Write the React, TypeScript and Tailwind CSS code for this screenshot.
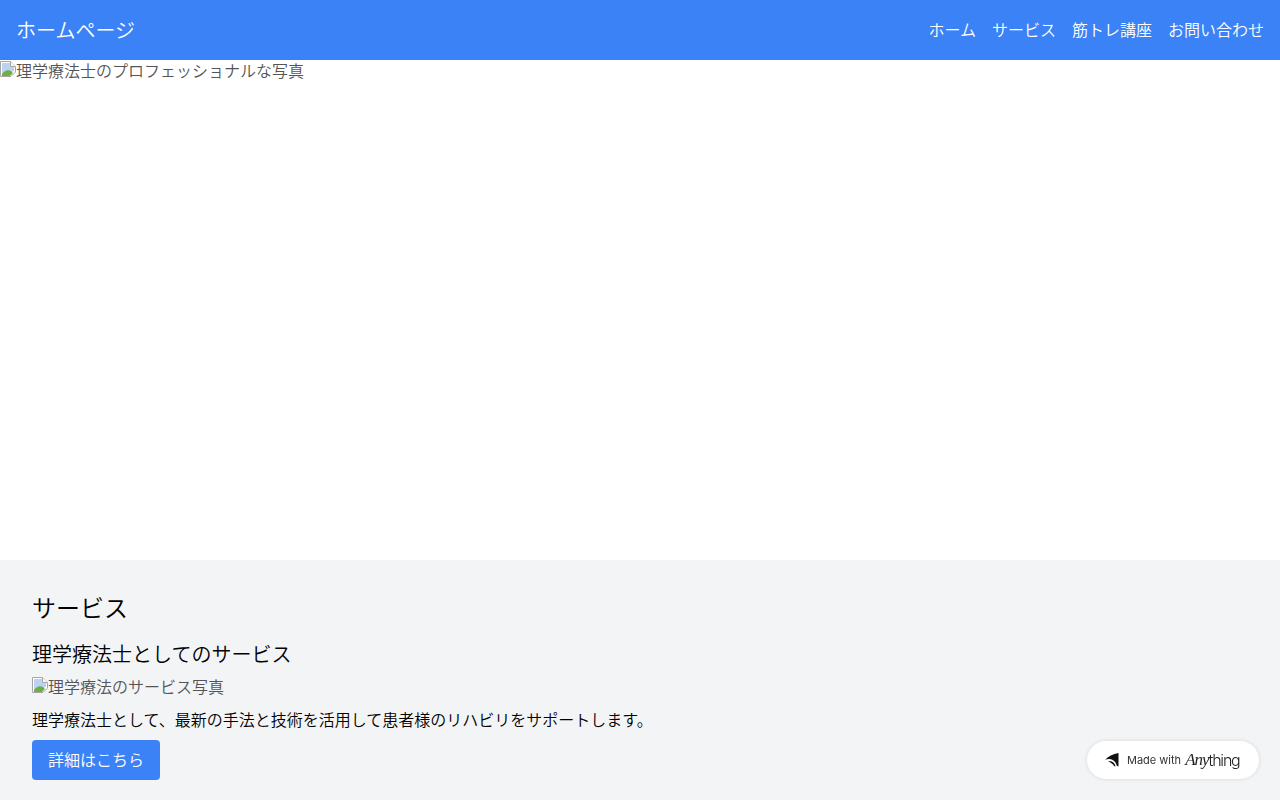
const jp = "font-['Open_Sans','Noto_Sans_CJK_JP',sans-serif] font-[350]";
const altFont = "font-['Liberation_Sans','Noto_Sans_CJK_JP',sans-serif]";
const titleFont = "font-['Noto_Sans_CJK_JP',sans-serif]";

function BrokenImage() {
  return (
    <svg width="16" height="16" viewBox="0 0 16 16" className="mt-px inline-block align-top">
      <path d="M0.5 0.5H10.5L15.5 5.5V11L11 15.5H0.5Z" fill="#fff" stroke="#a6a6a6" />
      <path d="M2 2H10V6H14V10L9 12L2 14Z" fill="#bcd2f4" />
      <path d="M2 15V13C5 9 8 8.5 11 10L13 12L10 15Z" fill="#6fae45" />
      <path d="M10.5 0.5V5.5H15.5" fill="#fff" stroke="#a6a6a6" />
    </svg>
  );
}

function AltImage({ alt, className }: { alt: string; className: string }) {
  return (
    <div className={`${altFont} ${className}`}>
      <BrokenImage />
      {alt}
    </div>
  );
}

function Logo() {
  return (
    <svg width="14" height="14" viewBox="0 0 14 14">
      <path d="M0 7C3 3.5 8 1 13.5 0V13.5L11.8 12.8C11.2 9.5 8.5 6.3 4.5 6C2.8 5.9 1.2 6.2 0 7Z" fill="#111" />
      <path d="M3 8.5C6.5 7.5 10 9.5 10.5 13.5L9 13C8 11 6 9.5 3 8.5Z" fill="#111" />
    </svg>
  );
}

function Badge() {
  return (
    <div className="fixed right-[21px] bottom-[21px] flex h-[38px] w-[172px] items-center rounded-full bg-white pl-[18px] shadow-[0_0_4px_rgba(0,0,0,0.12)]">
      <Logo />
      <span className="ml-2 font-['Inter',sans-serif] text-[11px] font-normal text-[#333]">Made with</span>
      <span className="ml-[4px] font-['Liberation_Serif',serif] text-[17px] font-normal tracking-[-1px] text-[#222] italic">Any</span>
      <span className="font-['Inter',sans-serif] text-[16px] font-light tracking-[-1.2px] text-[#222]">thing</span>
    </div>
  );
}

export default function App() {
  return (
    <div className={`min-h-screen bg-white text-black ${jp}`}>
      <header className="flex h-[60px] items-center justify-between bg-[#3b82f6] px-4 text-white">
        <div className={`text-xl ${titleFont}`}>ホームページ</div>
        <nav className="flex gap-4">
          <a>ホーム</a>
          <a>サービス</a>
          <a>筋トレ講座</a>
          <a>お問い合わせ</a>
        </nav>
      </header>
      <AltImage alt="理学療法士のプロフェッショナルな写真" className="h-[500px] w-full text-[#555]" />
      <section className="bg-gray-100 p-8">
        <h2 className="mb-4 text-2xl">サービス</h2>
        <h3 className={`mb-2 text-xl ${titleFont}`}>理学療法士としてのサービス</h3>
        <AltImage alt="理学療法のサービス写真" className="mb-2 text-[#555]" />
        <p className="mb-2">理学療法士として、最新の手法と技術を活用して患者様のリハビリをサポートします。</p>
        <button className="rounded bg-[#3b82f6] px-4 py-2 text-white">詳細はこちら</button>
      </section>
      <Badge />
    </div>
  );
}
